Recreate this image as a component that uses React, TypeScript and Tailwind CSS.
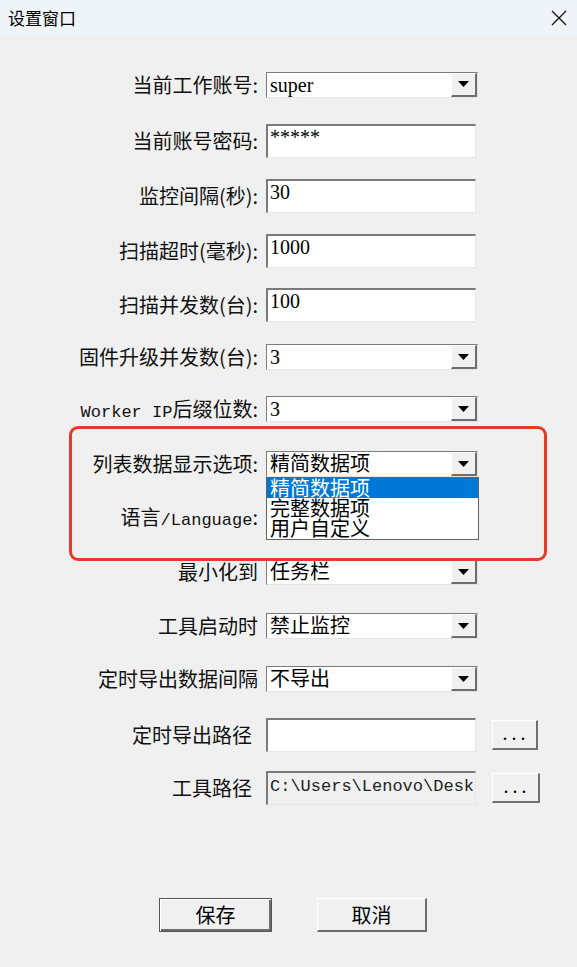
import React from "react"

const cjk = { fontFamily: '"Noto Sans CJK SC", sans-serif' }

const Arrow = () => (
    <div className="h-full w-[26px] shrink-0 bg-[#f0f0f0] border-t border-l border-t-white border-l-white border-b-2 border-r-2 border-b-[#6e6e6e] border-r-[#6e6e6e] flex items-center justify-center">
        <svg width="11" height="6" viewBox="0 0 11 6">
            <path d="M0 0 H11 L5.5 6 Z" fill="#000" />
        </svg>
    </div>
)

const Combo = ({ value, children }: { value: string; children?: React.ReactNode }) => (
    <div className="relative h-[26px] w-[212px] bg-white border-t border-l border-t-[#7c7c7c] border-l-[#7c7c7c] border-b border-r border-b-[#e4e4e4] border-r-[#e4e4e4] flex items-center">
        <span className="flex-1 pl-[3px] text-[20px] leading-[24px] text-black whitespace-nowrap overflow-hidden font-['Liberation_Serif','Noto_Sans_CJK_SC',serif]">
            {value}
        </span>
        <Arrow />
        {children}
    </div>
)

const TextBox = ({ value, gray, mono }: { value: string; gray?: boolean; mono?: boolean }) => (
    <div
        className={`h-[34px] w-[210px] border-t-2 border-l-2 border-t-[#7a7a7a] border-l-[#7a7a7a] border-b border-r border-b-[#e6e6e6] border-r-[#e6e6e6] overflow-hidden ${gray ? "bg-[#f0f0f0]" : "bg-white"}`}
    >
        {mono ? (
            <div className="pl-[2px] pt-[3px] text-[17px] leading-[22px] text-[#222] whitespace-nowrap font-['Liberation_Mono',monospace]">
                {value}
            </div>
        ) : (
            <div className="pl-[2px] text-[20px] leading-[22px] text-black whitespace-nowrap font-['Liberation_Serif','Noto_Sans_CJK_SC',serif]">
                {value}
            </div>
        )}
    </div>
)

const Label = ({ children, pr = "pr-0" }: { children: React.ReactNode; pr?: string }) => (
    <div className={`w-[258px] h-[24px] shrink-0 text-right text-[20px] leading-[24px] text-[#111] whitespace-nowrap ${pr}`} style={cjk}>
        {children}
    </div>
)

const Mono = ({ children }: { children: React.ReactNode }) => (
    <span className="font-['Liberation_Mono',monospace] text-[17px] leading-none">{children}</span>
)

const DotsButton = ({ w }: { w: string }) => (
    <div className={`ml-[16px] h-[30px] ${w} bg-[#f0f0f0] border-t border-l border-t-white border-l-white border-b-2 border-r-2 border-b-[#707070] border-r-[#707070] flex items-end justify-center pb-[5px] pl-[3px]`}>
        <span className="text-[20px] leading-none tracking-[4px] font-['Liberation_Serif',serif]">...</span>
    </div>
)

export default function App() {
    return (
        <div className="w-[577px] h-[967px] bg-[#f0f0f0] flex flex-col relative overflow-hidden" style={cjk}>
            {/* title bar */}
            <div className="h-[35px] shrink-0 bg-[#eff4f9] flex items-center justify-between pl-[8px] pr-[10px]">
                <span className="text-[17px] text-black leading-none">设置窗口</span>
                <svg width="16" height="16" viewBox="0 0 16 16">
                    <path d="M1 1 L15 15 M15 1 L1 15" stroke="#111" strokeWidth="1.3" />
                </svg>
            </div>

            <div className="flex flex-col">
                <div className="flex items-center mt-[36px] h-[27px]">
                    <Label>当前工作账号:</Label>
                    <div className="ml-[8px]"><Combo value="super" /></div>
                </div>
                <div className="flex items-center mt-[26px]">
                    <Label>当前账号密码:</Label>
                    <div className="ml-[8px]"><TextBox value="*****" /></div>
                </div>
                <div className="flex items-center mt-[21px]">
                    <Label>监控间隔(秒):</Label>
                    <div className="ml-[8px]"><TextBox value="30" /></div>
                </div>
                <div className="flex items-center mt-[21px]">
                    <Label>扫描超时(毫秒):</Label>
                    <div className="ml-[8px]"><TextBox value="1000" /></div>
                </div>
                <div className="flex items-center mt-[20px]">
                    <Label>扫描并发数(台):</Label>
                    <div className="ml-[8px]"><TextBox value="100" /></div>
                </div>
                <div className="flex items-center mt-[22px]">
                    <Label>固件升级并发数(台):</Label>
                    <div className="ml-[8px]"><Combo value="3" /></div>
                </div>
                <div className="flex items-center mt-[26px]">
                    <Label><Mono>Worker IP</Mono>后缀位数:</Label>
                    <div className="ml-[8px]"><Combo value="3" /></div>
                </div>
                <div className="flex items-center mt-[29px] relative z-10">
                    <Label>列表数据显示选项:</Label>
                    <div className="ml-[8px]">
                        <Combo value="精简数据项">
                            <div className="absolute left-[-1px] top-[25px] w-[213px] bg-white border border-[#646464] text-[20px] leading-[20px] text-black" style={cjk}>
                                <div className="bg-[#0078d7] text-white pl-[3px] h-[20px]">精简数据项</div>
                                <div className="pl-[3px] h-[20px]">完整数据项</div>
                                <div className="pl-[3px] h-[21px]">用户自定义</div>
                            </div>
                        </Combo>
                    </div>
                </div>
                <div className="flex items-center mt-[27px]">
                    <Label>语言<Mono>/Language</Mono>:</Label>
                    <div className="ml-[8px]"><Combo value="中文" /></div>
                </div>
                <div className="flex items-center mt-[29px]">
                    <Label>最小化到</Label>
                    <div className="ml-[8px]"><Combo value="任务栏" /></div>
                </div>
                <div className="flex items-center mt-[28px]">
                    <Label>工具启动时</Label>
                    <div className="ml-[8px]"><Combo value="禁止监控" /></div>
                </div>
                <div className="flex items-center mt-[27px]">
                    <Label>定时导出数据间隔</Label>
                    <div className="ml-[8px]"><Combo value="不导出" /></div>
                </div>
                <div className="flex items-center mt-[26px]">
                    <Label pr="pr-[6px]">定时导出路径</Label>
                    <div className="ml-[8px]"><TextBox value="" /></div>
                    <DotsButton w="w-[46px]" />
                </div>
                <div className="flex items-center mt-[19px]">
                    <Label pr="pr-[6px]">工具路径</Label>
                    <div className="ml-[8px]"><TextBox value="C:\Users\Lenovo\Desktop" gray mono /></div>
                    <DotsButton w="w-[48px]" />
                </div>

                <div className="flex mt-[93px] pl-[159px] gap-[45px]">
                    <div className="h-[34px] w-[113px] bg-[#f0f0f0] border border-[#555] shadow-[inset_1px_1px_0_#fff,inset_-2px_-2px_0_#6d6d6d] flex items-center justify-center text-[20px] text-black">
                        保存
                    </div>
                    <div className="h-[34px] w-[110px] bg-[#f0f0f0] border-t border-l border-t-white border-l-white border-b-2 border-r-2 border-b-[#6d6d6d] border-r-[#6d6d6d] flex items-center justify-center text-[20px] text-black">
                        取消
                    </div>
                </div>
            </div>

            {/* annotation box */}
            <div className="absolute left-[69px] top-[426px] w-[478px] h-[135px] border-[3px] border-[#e63c27] rounded-[9px] z-20 pointer-events-none" />
        </div>
    )
}
